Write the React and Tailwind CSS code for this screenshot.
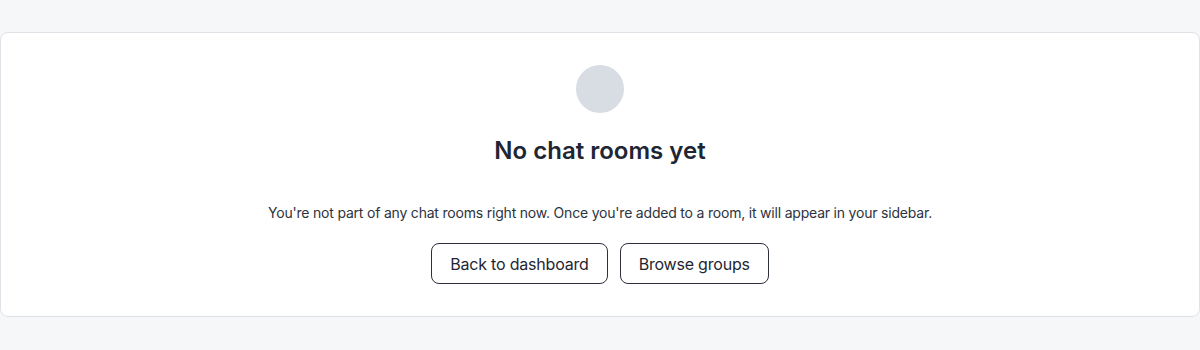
export default function App() {
  return (
    <div className="min-h-[350px] bg-[#f6f7f9] pt-8 font-['Inter',sans-serif]">
      <div className="rounded-lg border border-[#dfe1e6] bg-white px-8 pt-8 pb-8 flex flex-col items-center text-center">
        <div className="h-12 w-12 rounded-full bg-[#d8dce3]"></div>
        <h2 className="mt-[22px] text-2xl leading-8 font-semibold text-[#1f2633]">No chat rooms yet</h2>
        <p className="mt-[36px] text-sm leading-5 tracking-[-0.2px] text-[#2d3340]">
          You're not part of any chat rooms right now. Once you're added to a room, it will appear in your sidebar.
        </p>
        <div className="mt-5 flex gap-3">
          <button className="h-[41px] rounded-lg border border-[#2b303b] px-[18px] text-base tracking-[-0.2px] text-[#1f2633]">
            Back to dashboard
          </button>
          <button className="h-[41px] rounded-lg border border-[#2b303b] px-[18px] text-base tracking-[-0.2px] text-[#1f2633]">
            Browse groups
          </button>
        </div>
      </div>
    </div>
  );
}
